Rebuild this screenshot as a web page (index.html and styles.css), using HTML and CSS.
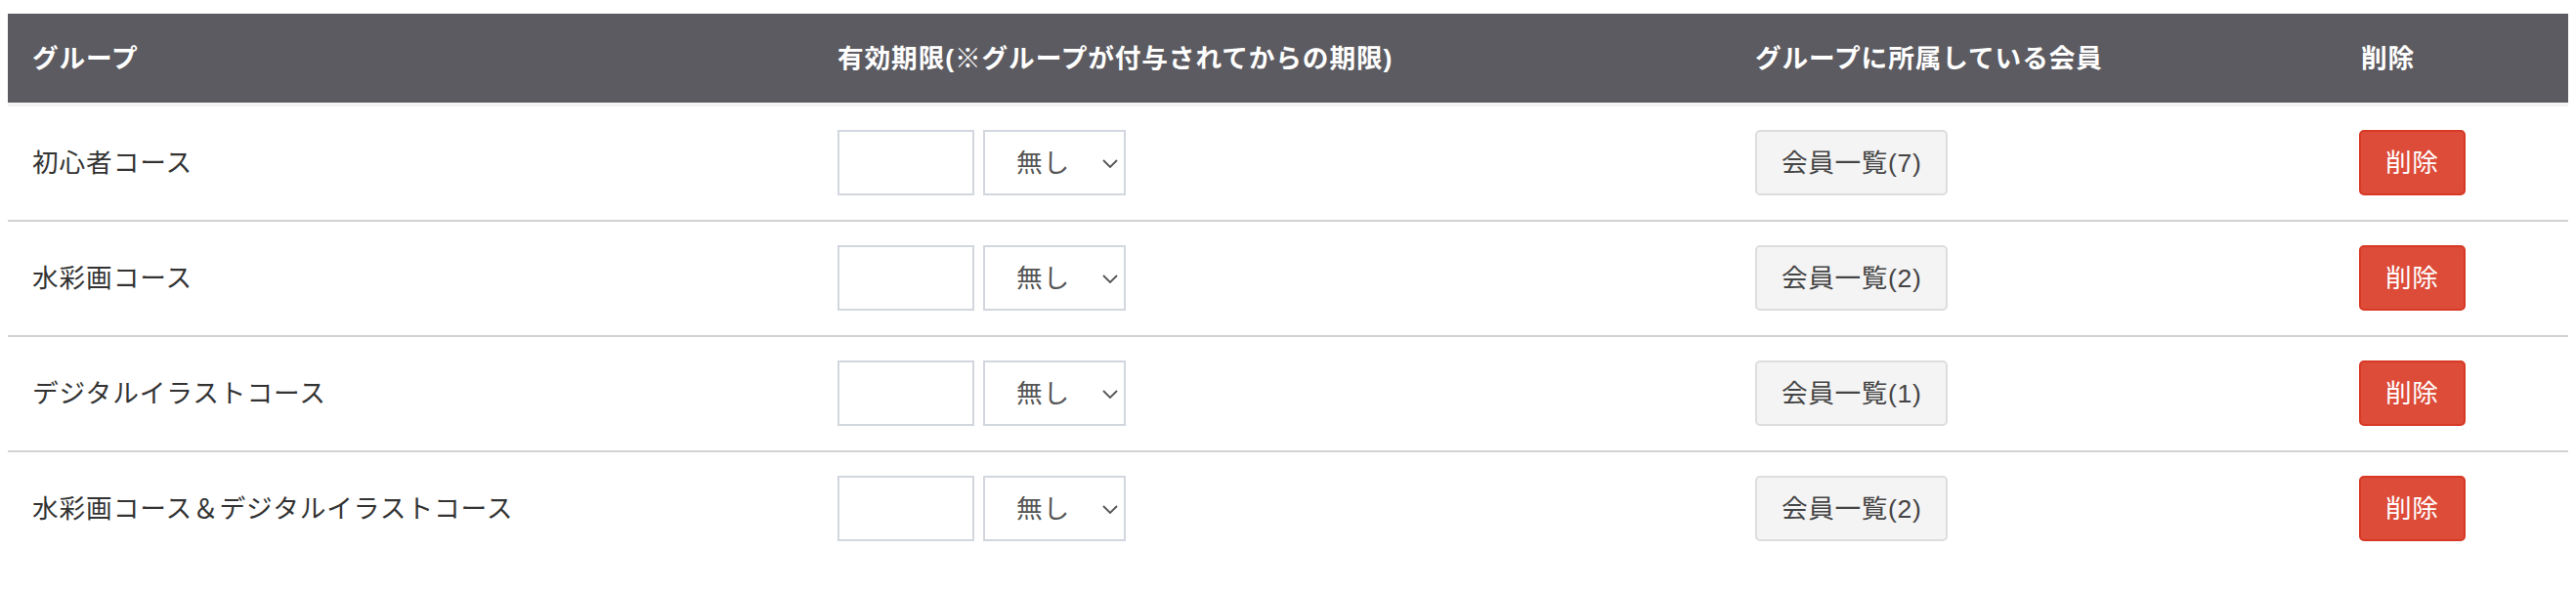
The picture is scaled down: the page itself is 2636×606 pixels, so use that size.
FILE: index.html
```html
<!DOCTYPE html>
<html lang="ja">
<head>
<meta charset="utf-8">
<title>グループ</title>
<link rel="stylesheet" href="styles.css">
</head>
<body>
<table class="group-table">
  <colgroup>
    <col class="c-name">
    <col class="c-term">
    <col class="c-members">
    <col class="c-del">
  </colgroup>
  <thead>
    <tr>
      <th>グループ</th>
      <th>有効期限(※グループが付与されてからの期限)</th>
      <th>グループに所属している会員</th>
      <th>削除</th>
    </tr>
  </thead>
  <tbody>
    <tr>
      <td>初心者コース</td>
      <td><div class="term"><input class="num" type="text"><span class="sel"><select><option>無し</option></select><svg class="chev" viewBox="0 0 16 9" width="16" height="9"><path d="M1 1 L8 8 L15 1" fill="none" stroke="#555" stroke-width="1.8"/></svg></span></div></td>
      <td><button class="btn btn-default">会員一覧(7)</button></td>
      <td><button class="btn btn-danger">削除</button></td>
    </tr>
    <tr>
      <td>水彩画コース</td>
      <td><div class="term"><input class="num" type="text"><span class="sel"><select><option>無し</option></select><svg class="chev" viewBox="0 0 16 9" width="16" height="9"><path d="M1 1 L8 8 L15 1" fill="none" stroke="#555" stroke-width="1.8"/></svg></span></div></td>
      <td><button class="btn btn-default">会員一覧(2)</button></td>
      <td><button class="btn btn-danger">削除</button></td>
    </tr>
    <tr>
      <td>デジタルイラストコース</td>
      <td><div class="term"><input class="num" type="text"><span class="sel"><select><option>無し</option></select><svg class="chev" viewBox="0 0 16 9" width="16" height="9"><path d="M1 1 L8 8 L15 1" fill="none" stroke="#555" stroke-width="1.8"/></svg></span></div></td>
      <td><button class="btn btn-default">会員一覧(1)</button></td>
      <td><button class="btn btn-danger">削除</button></td>
    </tr>
    <tr>
      <td>水彩画コース＆デジタルイラストコース</td>
      <td><div class="term"><input class="num" type="text"><span class="sel"><select><option>無し</option></select><svg class="chev" viewBox="0 0 16 9" width="16" height="9"><path d="M1 1 L8 8 L15 1" fill="none" stroke="#555" stroke-width="1.8"/></svg></span></div></td>
      <td><button class="btn btn-default">会員一覧(2)</button></td>
      <td><button class="btn btn-danger">削除</button></td>
    </tr>
  </tbody>
</table>
</body>
</html>
```
FILE: styles.css
```css
html, body {
  background: #fff;
}
body {
  margin: 14px 8px 0;
  font-family: "Liberation Sans", "Noto Sans CJK JP", sans-serif;
  font-size: 26.67px;
  letter-spacing: 0.9px;
  color: #333;
}
.group-table {
  width: 2620px;
  border-collapse: collapse;
  table-layout: fixed;
}
.c-name { width: 824px; }
.c-term { width: 939px; }
.c-members { width: 618px; }
.c-del { width: 239px; }

.group-table th {
  background: #5c5b61;
  color: #fff;
  font-weight: bold;
  text-align: left;
  height: 93px;
  padding: 0 0 0 25px;
  line-height: 36px;
  border-bottom: 4px solid #f3f3f3;
  box-sizing: border-box;
  vertical-align: middle;
}
.group-table th:last-child {
  padding-left: 27px;
}
.group-table td {
  padding: 24px 0 25px 25px;
  line-height: 36px;
  vertical-align: middle;
  border-bottom: 2px solid #d2d2d2;
}
.group-table tbody tr:last-child td {
  border-bottom: none;
}
.term {
  display: flex;
  gap: 9px;
  align-items: center;
}
.num {
  width: 140px;
  height: 67px;
  box-sizing: border-box;
  border: 2px solid #d2d6de;
  border-radius: 0;
  margin: 0;
  padding: 0 10px;
  font: inherit;
  background: #fff;
}
.sel {
  position: relative;
  display: inline-block;
}
.sel select {
  appearance: none;
  -webkit-appearance: none;
  width: 146px;
  height: 67px;
  box-sizing: border-box;
  border: 2px solid #d2d6de;
  border-radius: 0;
  background: #fff;
  margin: 0;
  padding: 0 0 0 32px;
  font: inherit;
  letter-spacing: 0.9px;
  color: #555;
}
.chev {
  position: absolute;
  left: 122px;
  top: 30px;
  pointer-events: none;
}
.btn {
  height: 67px;
  box-sizing: border-box;
  border: 2px solid;
  border-radius: 5px;
  margin: 0;
  padding: 0 25px;
  font: inherit;
  letter-spacing: 0.6px;
  line-height: 36px;
  display: block;
}
.btn-default {
  background: #f4f4f4;
  border-color: #ddd;
  color: #444;
}
.btn-danger {
  background: #dd4b39;
  border-color: #d73925;
  color: #fff;
}
```
